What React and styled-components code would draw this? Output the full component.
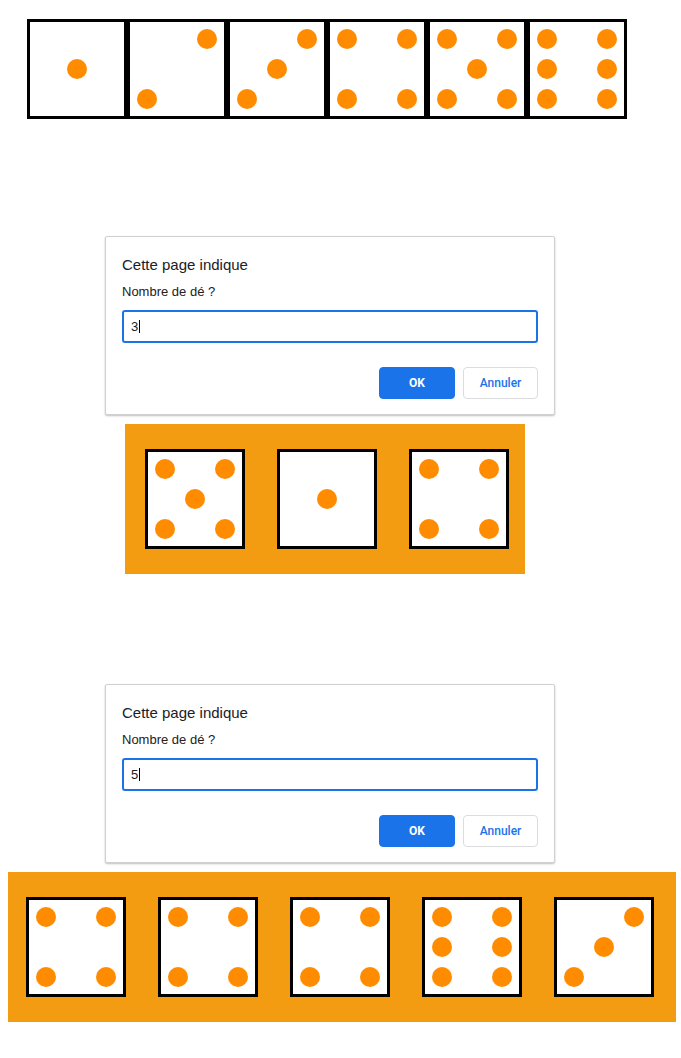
import React from "react";
import styled, { createGlobalStyle } from "styled-components";

const GlobalStyle = createGlobalStyle`
  body {
    margin: 0;
    padding: 0;
    background: #fff;
    font-family: 'Liberation Sans', Arial, sans-serif;
  }
`;

// positions on a 3x3 grid: [row, col]
const FACES = {
  1: [[2, 2]],
  2: [[1, 3], [3, 1]],
  3: [[1, 3], [2, 2], [3, 1]],
  4: [[1, 1], [1, 3], [3, 1], [3, 3]],
  5: [[1, 1], [1, 3], [2, 2], [3, 1], [3, 3]],
  6: [[1, 1], [2, 1], [3, 1], [1, 3], [2, 3], [3, 3]],
};

const Page = styled.div`
  display: flex;
  flex-direction: column;
  align-items: flex-start;
  padding-top: 19px;
  padding-bottom: 37px;
`;

const DiceRow = styled.div`
  display: flex;
  margin-left: 27px;
`;

const Face = styled.div`
  box-sizing: border-box;
  width: 100px;
  height: 100px;
  flex: 0 0 100px;
  background: #fff;
  border: 3px solid #000;
  padding: 7px;
  display: grid;
  grid-template-columns: repeat(3, 20px);
  grid-template-rows: repeat(3, 20px);
  justify-content: space-between;
  align-content: space-between;
`;

const Pip = styled.span`
  width: 20px;
  height: 20px;
  border-radius: 50%;
  background: #ff8c00;
  grid-row: ${(p) => p.$row};
  grid-column: ${(p) => p.$col};
`;

const Die = ({ value }) => (
  <Face>
    {FACES[value].map(([r, c], i) => (
      <Pip key={i} $row={r} $col={c} />
    ))}
  </Face>
);

const Dialog = styled.div`
  box-sizing: border-box;
  width: 450px;
  margin-top: ${(p) => p.$top}px;
  margin-left: 105px;
  padding: 18px 16px 15px 16px;
  background: #fff;
  border: 1px solid #d0d0d0;
  border-radius: 2px;
  box-shadow: 0 1px 2px rgba(0, 0, 0, 0.25);
  display: flex;
  flex-direction: column;
`;

const Title = styled.div`
  font-size: 15px;
  line-height: 20px;
  color: #202124;
`;

const Label = styled.div`
  margin-top: 8px;
  font-size: 13px;
  line-height: 18px;
  color: #202124;
`;

const Field = styled.div`
  box-sizing: border-box;
  margin-top: 9px;
  height: 33px;
  border: 2px solid #1a73e8;
  border-radius: 3px;
  padding: 0 7px;
  display: flex;
  align-items: center;
  font-size: 13px;
  color: #202124;
`;

const Caret = styled.span`
  display: inline-block;
  width: 1px;
  height: 13px;
  background: #000;
  margin-left: 1px;
`;

const Actions = styled.div`
  margin-top: 24px;
  display: flex;
  justify-content: flex-end;
  gap: 8px;
`;

const Button = styled.button`
  box-sizing: border-box;
  height: 32px;
  width: ${(p) => (p.$primary ? 76 : 75)}px;
  border-radius: 4px;
  border: 1px solid ${(p) => (p.$primary ? "#1a73e8" : "#dadce0")};
  background: ${(p) => (p.$primary ? "#1a73e8" : "#fff")};
  color: ${(p) => (p.$primary ? "#fff" : "#1a73e8")};
  font-family: Roboto, 'Liberation Sans', sans-serif;
  font-size: 12px;
  font-weight: ${(p) => (p.$primary ? 700 : 500)};
  padding: 0;
  cursor: pointer;
`;

const Tray = styled.div`
  box-sizing: border-box;
  display: flex;
  gap: 32px;
  margin-top: 9px;
  margin-left: ${(p) => p.$left}px;
  width: ${(p) => p.$width}px;
  height: 150px;
  padding: 25px 0 0 ${(p) => p.$pad}px;
  background: #f39c12;
`;

const Prompt = ({ top, value }) => (
  <Dialog $top={top}>
    <Title>Cette page indique</Title>
    <Label>Nombre de dé ?</Label>
    <Field>
      {value}
      <Caret />
    </Field>
    <Actions>
      <Button $primary>OK</Button>
      <Button>Annuler</Button>
    </Actions>
  </Dialog>
);

const App = () => (
  <>
    <GlobalStyle />
    <Page>
      <DiceRow>
        {[1, 2, 3, 4, 5, 6].map((v) => (
          <Die key={v} value={v} />
        ))}
      </DiceRow>
      <Prompt top={117} value="3" />
      <Tray $left={125} $width={400} $pad={20}>
        {[5, 1, 4].map((v, i) => (
          <Die key={i} value={v} />
        ))}
      </Tray>
      <Prompt top={110} value="5" />
      <Tray $left={8} $width={668} $pad={18}>
        {[4, 4, 4, 6, 3].map((v, i) => (
          <Die key={i} value={v} />
        ))}
      </Tray>
    </Page>
  </>
);

export default App;
